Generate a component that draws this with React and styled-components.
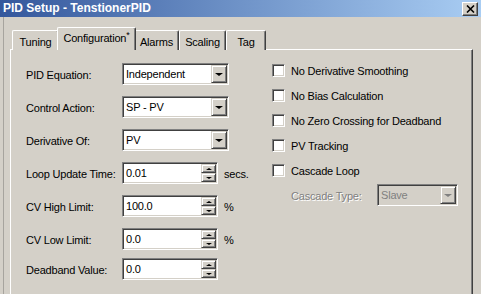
import React from "react";
import styled, { createGlobalStyle, css } from "styled-components";

const face = "#d4d0c8";
const shadow = "#808080";
const dark = "#404040";

const Global = createGlobalStyle`
  html, body { margin: 0; padding: 0; background: ${face}; overflow: hidden; }
  body { font-family: "Liberation Sans", Arial, sans-serif; font-size: 11px; color: #000; }
  * { box-sizing: border-box; }
`;

const Window = styled.div`
  width: 481px;
  height: 294px;
  display: flex;
  flex-direction: column;
  background: ${face};
  overflow: hidden;
`;

const TitleBar = styled.div`
  height: 17px;
  flex: none;
  display: flex;
  align-items: center;
  justify-content: space-between;
  padding: 0 3px 0 3px;
  background: linear-gradient(to right, #34579c 0%, #6f93c8 50%, #a9cdf3 100%);
`;

const Title = styled.span`
  color: #fff;
  font-weight: bold;
  font-size: 12px;
  line-height: 17px;
`;

const CloseButton = styled.div`
  width: 16px;
  height: 14px;
  background: ${face};
  border: 1px solid;
  border-color: #fff ${dark} ${dark} #fff;
  box-shadow: inset -1px -1px ${shadow};
  display: flex;
  align-items: center;
  justify-content: center;
`;

const Body = styled.div`
  flex: 1;
  margin-left: 3px;
  border-left: 1px solid #a7a49e;
  padding: 10px 0 0 6px;
  display: flex;
  flex-direction: column;
`;

const TabRow = styled.div`
  height: 23px;
  display: flex;
  align-items: flex-end;
  padding-left: 2px;
  position: relative;
  z-index: 1;
  margin-bottom: -1px;
`;

const Tab = styled.div`
  width: ${(p) => p.$w}px;
  height: 20px;
  flex: none;
  padding-top: 2px;
  display: flex;
  align-items: center;
  justify-content: center;
  border-top: 1px solid #fff;
  border-left: 1px solid #fff;
  border-right: 1px solid ${dark};
  box-shadow: inset -1px 0 ${shadow};
  border-radius: 2px 2px 0 0;
  background: ${face};
  letter-spacing: -0.2px;
  ${(p) =>
    p.$active &&
    css`
      width: ${p.$w + 4}px;
      height: 23px;
      margin: 0 -2px;
      padding: 0 0 3px 0;
      position: relative;
      z-index: 2;
    `}
`;

const Sup = styled.span`
  font-size: 9px;
  position: relative;
  top: -3px;
`;

const Panel = styled.div`
  flex: 1;
  width: 463px;
  border-top: 1px solid #fff;
  border-left: 1px solid #fff;
  border-right: 1px solid ${dark};
  box-shadow: inset -1px 0 ${shadow};
  padding: 13px 0 0 15px;
  display: flex;
`;

const LeftCol = styled.div`
  width: 246px;
  display: flex;
  flex-direction: column;
  gap: 11px;
`;

const Row = styled.div`
  height: 22px;
  display: flex;
  align-items: center;
  margin-top: ${(p) => p.$shift || 0}px;
`;

const Label = styled.span`
  width: ${(p) => p.$w || 96}px;
  flex: none;
  letter-spacing: -0.2px;
  padding-top: 2px;
  ${(p) =>
    p.$disabled &&
    css`
      color: ${shadow};
      text-shadow: 1px 1px #fff;
    `}
`;

const Field = styled.div`
  width: ${(p) => p.$w}px;
  height: 22px;
  flex: none;
  display: flex;
  align-items: stretch;
  border: 1px solid;
  border-color: ${shadow} #fff #fff ${shadow};
  box-shadow: inset 1px 1px ${dark}, inset -1px -1px ${face};
  background: ${(p) => (p.$disabled ? face : "#fff")};
  padding: 1px;
`;

const FieldText = styled.span`
  flex: 1;
  display: flex;
  align-items: center;
  padding-left: 2px;
  letter-spacing: -0.2px;
  color: ${(p) => (p.$disabled ? shadow : "#000")};
`;

const raised = css`
  background: ${face};
  border: 1px solid;
  border-color: ${face} ${dark} ${dark} ${face};
  box-shadow: inset 1px 1px #fff, inset -1px -1px ${shadow};
  display: flex;
  align-items: center;
  justify-content: center;
`;

const DropButton = styled.div`
  ${raised}
  width: 16px;
  flex: none;
`;

const Arrow = styled.span`
  width: 0;
  height: 0;
  border-left: ${(p) => p.$s || 4}px solid transparent;
  border-right: ${(p) => p.$s || 4}px solid transparent;
  ${(p) =>
    p.$up
      ? css`border-bottom: ${(p.$s || 4) - 1}px solid ${p.$disabled ? shadow : "#000"};`
      : css`border-top: ${(p.$s || 4) - 1}px solid ${p.$disabled ? shadow : "#000"};`}
`;

const SpinStack = styled.div`
  width: 15px;
  flex: none;
  display: flex;
  flex-direction: column;
`;

const SpinButton = styled.div`
  ${raised}
  flex: 1;
`;

const Unit = styled.span`
  margin-left: 6px;
  letter-spacing: -0.2px;
  padding-top: 2px;
`;

const RightCol = styled.div`
  display: flex;
  flex-direction: column;
  gap: 12px;
  padding-top: 1px;
`;

const CheckRow = styled.label`
  height: 13px;
  display: flex;
  align-items: center;
  gap: 6px;
  letter-spacing: -0.2px;
`;

const Box = styled.span`
  width: 13px;
  height: 13px;
  flex: none;
  border: 1px solid;
  border-color: ${shadow} #fff #fff ${shadow};
  box-shadow: inset 1px 1px ${dark}, inset -1px -1px ${face};
  background: #fff;
`;

const CascadeRow = styled(Row)`
  margin-left: 19px;
  margin-top: -5px;
`;

function Dropdown({ value, w = 107, disabled }) {
  return (
    <Field $w={w} $disabled={disabled}>
      <FieldText $disabled={disabled}>{value}</FieldText>
      <DropButton>
        <Arrow $disabled={disabled} />
      </DropButton>
    </Field>
  );
}

function Spinner({ value }) {
  return (
    <Field $w={96}>
      <FieldText>{value}</FieldText>
      <SpinStack>
        <SpinButton>
          <Arrow $up $s={3} />
        </SpinButton>
        <SpinButton>
          <Arrow $s={3} />
        </SpinButton>
      </SpinStack>
    </Field>
  );
}

const tabs = [
  { t: "Tuning", w: 47 },
  { t: "Configuration", w: 75, active: true },
  { t: "Alarms", w: 45 },
  { t: "Scaling", w: 47 },
  { t: "Tag", w: 40 },
];
const checks = [
  "No Derivative Smoothing",
  "No Bias Calculation",
  "No Zero Crossing for Deadband",
  "PV Tracking",
  "Cascade Loop",
];

export default function App() {
  return (
    <Window>
      <Global />
      <TitleBar>
        <Title>PID Setup - TenstionerPID</Title>
        <CloseButton>
          <svg width="9" height="8" viewBox="0 0 9 8">
            <path d="M1 0.5 L8 7.5 M8 0.5 L1 7.5" stroke="#000" strokeWidth="1.6" />
          </svg>
        </CloseButton>
      </TitleBar>
      <Body>
        <TabRow>
          {tabs.map(({ t, w, active }) => (
            <Tab key={t} $w={w} $active={active}>
              {t}
              {active && <Sup>*</Sup>}
            </Tab>
          ))}
        </TabRow>
        <Panel>
          <LeftCol>
            <Row>
              <Label>PID Equation:</Label>
              <Dropdown value="Independent" />
            </Row>
            <Row>
              <Label>Control Action:</Label>
              <Dropdown value="SP - PV" />
            </Row>
            <Row>
              <Label>Derivative Of:</Label>
              <Dropdown value="PV" />
            </Row>
            <Row>
              <Label>Loop Update Time:</Label>
              <Spinner value="0.01" />
              <Unit>secs.</Unit>
            </Row>
            <Row>
              <Label>CV High Limit:</Label>
              <Spinner value="100.0" />
              <Unit>%</Unit>
            </Row>
            <Row>
              <Label>CV Low Limit:</Label>
              <Spinner value="0.0" />
              <Unit>%</Unit>
            </Row>
            <Row $shift={-3}>
              <Label>Deadband Value:</Label>
              <Spinner value="0.0" />
            </Row>
          </LeftCol>
          <RightCol>
            {checks.map((c) => (
              <CheckRow key={c}>
                <Box />
                {c}
              </CheckRow>
            ))}
            <CascadeRow>
              <Label $w={86} $disabled>
                Cascade Type:
              </Label>
              <Dropdown value="Slave" w={81} disabled />
            </CascadeRow>
          </RightCol>
        </Panel>
      </Body>
    </Window>
  );
}
